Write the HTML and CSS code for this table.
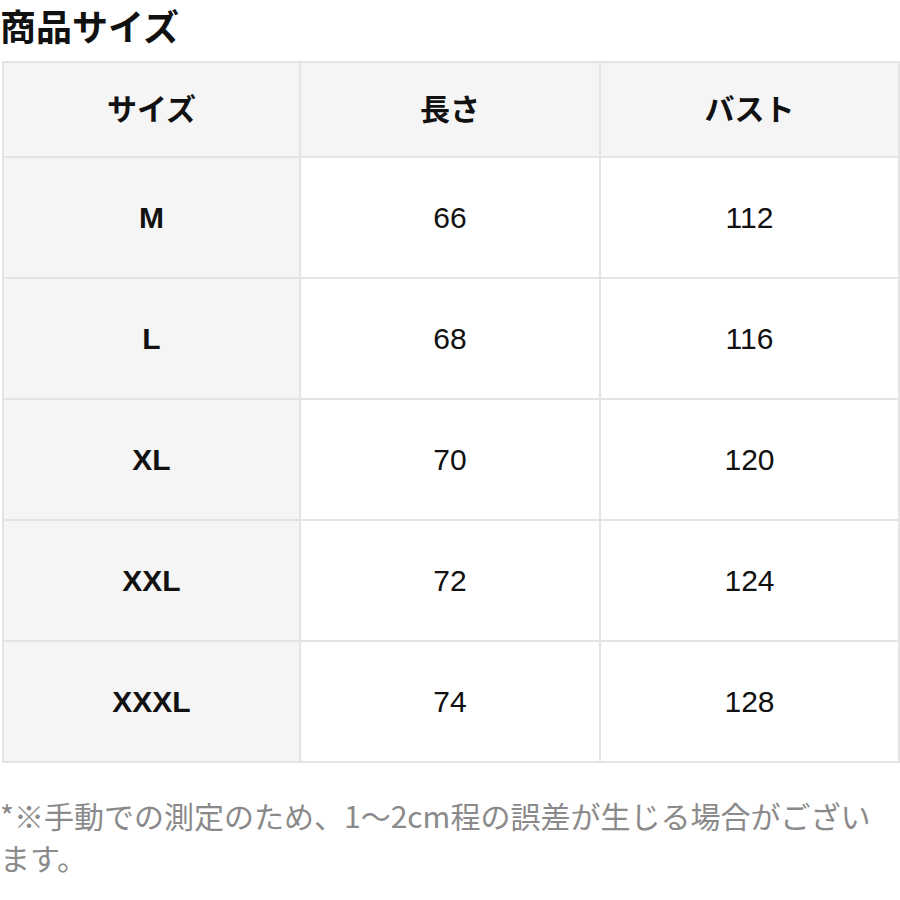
FILE: index.html
```html
<!DOCTYPE html>
<html lang="ja">
<head>
<meta charset="utf-8">
<link rel="stylesheet" href="styles.css">
</head>
<body>
<h1 class="title">商品サイズ</h1>
<table class="size-table">
  <colgroup>
    <col class="c1"><col class="c2"><col class="c3">
  </colgroup>
  <thead>
    <tr class="head-row"><th>サイズ</th><th>長さ</th><th>バスト</th></tr>
  </thead>
  <tbody>
    <tr><th>M</th><td>66</td><td>112</td></tr>
    <tr><th>L</th><td>68</td><td>116</td></tr>
    <tr><th>XL</th><td>70</td><td>120</td></tr>
    <tr><th>XXL</th><td>72</td><td>124</td></tr>
    <tr><th>XXXL</th><td>74</td><td>128</td></tr>
  </tbody>
</table>
<p class="note">*※手動での測定のため、1〜2cm程の誤差が生じる場合がございます。</p>
</body>
</html>
```
FILE: styles.css
```css
html, body {
  margin: 0;
  padding: 0;
  background: #ffffff;
}
body {
  font-family: "Liberation Sans", "Noto Sans CJK JP", sans-serif;
  color: #111111;
}
.title {
  margin: 0;
  font-family: "Noto Sans CJK JP", sans-serif;
  font-size: 36px;
  font-weight: 700;
  line-height: 50px;
  color: #111;
}
.size-table {
  margin: 11px 2px 0 2px;
  width: 896px;
  border-collapse: collapse;
  table-layout: fixed;
}
.size-table th,
.size-table td {
  border: 2px solid #e4e4e4;
  text-align: center;
  vertical-align: middle;
  padding: 0;
  height: 119px;
  font-size: 30px;
}
.size-table th {
  background: #f5f5f5;
  font-weight: 700;
  color: #111;
}
.size-table td {
  background: #ffffff;
  font-weight: 400;
  color: #111;
}
.head-row th {
  height: 87px;
  padding-bottom: 6px;
  font-family: "Noto Sans CJK JP", sans-serif;
}
.c1 { width: 297px; }
.c2 { width: 300px; }
.c3 { width: 299px; }
.note {
  margin: 31px 0 0 0;
  max-width: 880px;
  font-family: "Noto Sans CJK JP", sans-serif;
  font-size: 30px;
  line-height: 42px;
  color: #8a8a8a;
}
```
